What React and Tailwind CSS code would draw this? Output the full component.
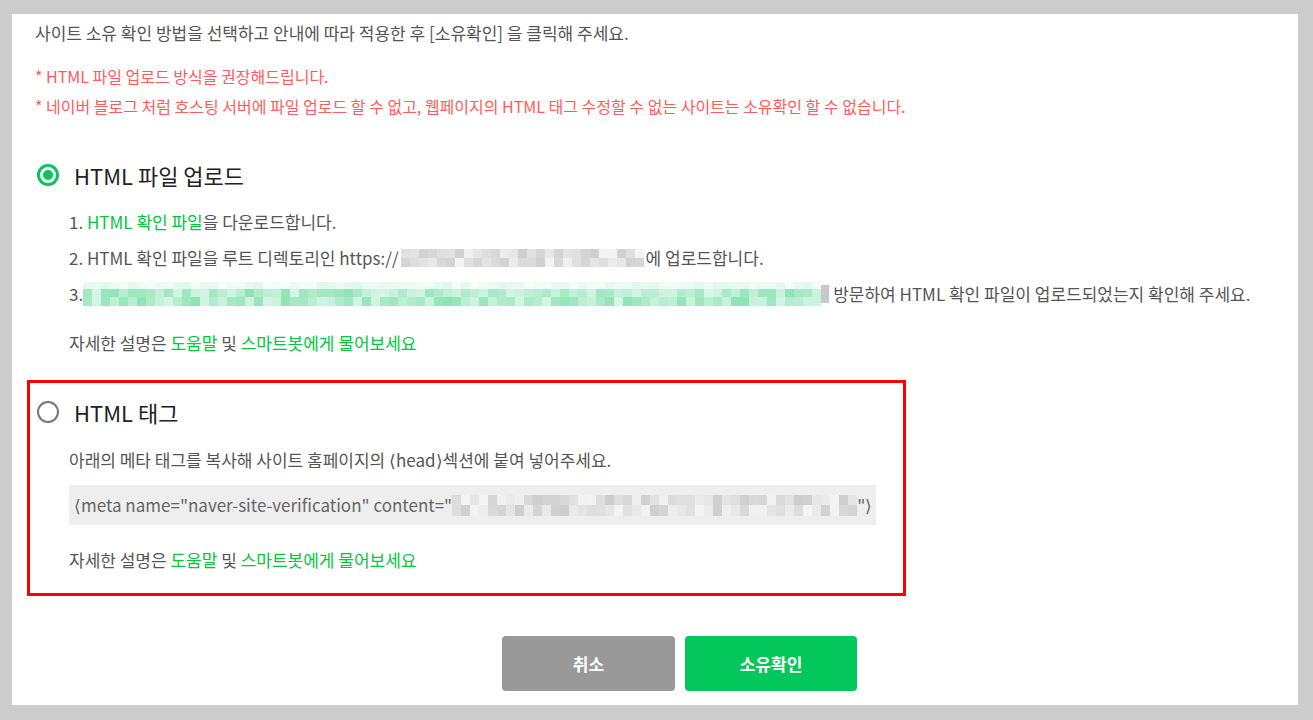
import React from "react";

const seeded = (seed) => {
  let s = seed;
  return () => {
    s = (s * 9301 + 49297) % 233280;
    return s / 233280;
  };
};

const PixelBlur = ({ cols, cell, rowHeights, palette, seed, className = "" }) => {
  const rand = seeded(seed);
  return (
    <span className={"inline-flex flex-col align-middle " + className}>
      {rowHeights.map((h, r) => (
        <span key={r} className="flex">
          {Array.from({ length: cols }).map((_, c) => (
            <span
              key={c}
              style={{
                width: cell,
                height: h,
                background: palette(r, rand()),
              }}
            />
          ))}
        </span>
      ))}
    </span>
  );
};

const grayTone = (r, v) => {
  const base = 205 + Math.round(v * 40);
  return `rgb(${base},${base},${base})`;
};

const greenTone = (r, v) => {
  if (r === 0) {
    const a = 0.04 + v * 0.1;
    return `rgba(40,200,120,${a})`;
  }
  const a = 0.18 + v * 0.32;
  return `rgba(30,200,110,${a})`;
};

const Radio = ({ checked }) =>
  checked ? (
    <span className="flex h-[22px] w-[22px] items-center justify-center rounded-full border-[3px] border-[#03c75a]">
      <span className="h-[10px] w-[10px] rounded-full bg-[#03c75a]" />
    </span>
  ) : (
    <span className="h-[22px] w-[22px] rounded-full border-2 border-[#777]" />
  );

const HelpLine = () => (
  <p className="text-[17px] leading-[36px] text-[#555]">
    자세한 설명은 <span className="text-[#00c73c]">도움말</span> 및{" "}
    <span className="text-[#00c73c]">스마트봇에게 물어보세요</span>
  </p>
);

export default function App() {
  return (
    <div
      className="min-h-screen bg-[#cccccc] pl-[12px] pr-[15px] pt-[14px] pb-[15px]"
      style={{ fontFamily: '"Noto Sans CJK KR", "Noto Sans", sans-serif' }}
    >
      <div className="h-[691px] bg-white">
        <div className="pl-[23px] pt-[8px]">
          <p className="text-[17px] leading-[22px] text-[#555]">
            사이트 소유 확인 방법을 선택하고 안내에 따라 적용한 후 [소유확인] 을 클릭해 주세요.
          </p>
          <div className="mt-[17px] text-[16px] leading-[30px] text-[#ff5b5b]">
            <p>* HTML 파일 업로드 방식을 권장해드립니다.</p>
            <p>
              * 네이버 블로그 처럼 호스팅 서버에 파일 업로드 할 수 없고, 웹페이지의 HTML 태그 수정할 수 없는
              사이트는 소유확인 할 수 없습니다.
            </p>
          </div>

          <div className="mt-[39px] flex items-center gap-[15px] pl-[2px]">
            <Radio checked />
            <span className="text-[22px] leading-[30px] text-[#222]">HTML 파일 업로드</span>
          </div>
          <div className="mt-[14px] pl-[34px] text-[17px] leading-[36px] text-[#555]">
            <p>
              1. <span className="text-[#00c73c]">HTML 확인 파일</span>을 다운로드합니다.
            </p>
            <p className="flex items-center">
              <span>2. HTML 확인 파일을 루트 디렉토리인 https://</span>
              <PixelBlur cols={27} cell={9} rowHeights={[9, 9]} palette={grayTone} seed={7} className="mx-[2px]" />
              <span>에 업로드합니다.</span>
            </p>
            <p className="flex items-center">
              <span>3.</span>
              <PixelBlur cols={82} cell={9} rowHeights={[7, 8, 9]} palette={greenTone} seed={13} />
              <span className="h-[18px] w-[8px] self-center bg-[#c8c8c8]" />
              <span className="ml-[4px]">방문하여 HTML 확인 파일이 업로드되었는지 확인해 주세요.</span>
            </p>
            <div className="mt-[13px]">
              <HelpLine />
            </div>
          </div>
        </div>

        <div className="ml-[15px] mt-[19px] w-[879px] border-[3px] border-[#ff0000] pl-[7px] pb-[15px] pt-[14px]">
          <div className="flex items-center gap-[15px]">
            <Radio />
            <span className="text-[22px] leading-[30px] text-[#222]">HTML 태그</span>
          </div>
          <div className="pl-[32px]">
            <p className="mt-[15px] text-[17px] leading-[36px] text-[#555]">
              아래의 메타 태그를 복사해 사이트 홈페이지의 ⟨head⟩섹션에 붙여 넣어주세요.
            </p>
            <div className="mt-[7px] flex h-[40px] w-[807px] items-center bg-[#eeeeee] pl-[5px] text-[17px] text-[#666]">
              <span>⟨meta name="naver-site-verification" content="</span>
              <PixelBlur cols={45} cell={9} rowHeights={[10, 11]} palette={grayTone} seed={29} />
              <span>"⟩</span>
            </div>
            <div className="mt-[17px]">
              <HelpLine />
            </div>
          </div>
        </div>

        <div className="mt-[40px] flex gap-[10px] pl-[490px]">
          <button className="h-[55px] w-[173px] rounded-[4px] bg-[#999999] text-[17px] font-bold text-white">
            취소
          </button>
          <button className="h-[55px] w-[172px] rounded-[4px] bg-[#03c75a] text-[17px] font-bold text-white">
            소유확인
          </button>
        </div>
      </div>
    </div>
  );
}
